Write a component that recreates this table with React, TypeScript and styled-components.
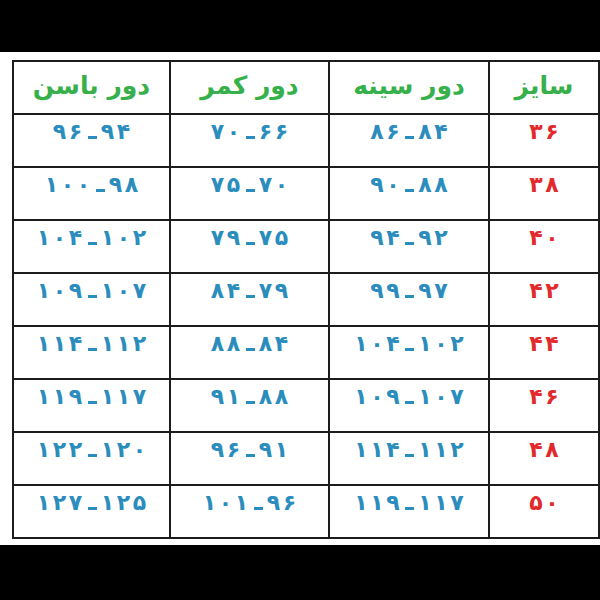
import React from 'react'
import styled, { createGlobalStyle } from 'styled-components'

const GlobalStyle = createGlobalStyle`
  html, body {
    margin: 0;
    padding: 0;
    background: #000;
  }
  body {
    font-family: "DejaVu Sans", sans-serif;
  }
`

const Screen = styled.div`
  width: 600px;
  height: 600px;
  background: #000;
  padding-top: 52px;
  box-sizing: border-box;
`

const Sheet = styled.div`
  width: 600px;
  height: 493px;
  background: #fff;
  padding: 8px 6px 8px 12px;
  box-sizing: border-box;
`

const Table = styled.table`
  width: 100%;
  direction: rtl;
  border-collapse: collapse;
  table-layout: fixed;
  border: 2px solid #1c1c1c;
`

const HeadCell = styled.th<{ $w: number }>`
  width: ${p => p.$w}px;
  height: 47px;
  border: 2px solid #1c1c1c;
  padding: 0 0 4px 0;
  font-size: 25px;
  font-weight: bold;
  color: #36b04a;
  text-align: center;
  vertical-align: middle;
`

const Cell = styled.td<{ $tone: 'size' | 'range' }>`
  height: 45px;
  border: 2px solid #1c1c1c;
  padding: 6px 0 0 0;
  font-size: 22px;
  font-weight: bold;
  line-height: 22px;
  color: ${p => (p.$tone === 'size' ? '#e2292c' : '#2a8dbd')};
  text-align: center;
  vertical-align: top;
`

const Digits = styled.span`
  display: inline-flex;
  direction: ltr;
  align-items: baseline;
`

const Glyph = styled.span`
  display: inline-block;
  width: 16px;
  text-align: center;
`

const Dash = styled.span`
  display: inline-block;
  width: 9px;
  height: 3px;
  margin: 0 3px 0 4px;
  background: currentColor;
`

const fa = (n: number) => String(n).replace(/\d/g, d => '۰۱۲۳۴۵۶۷۸۹'[Number(d)])

const Num: React.FC<{ n: number }> = ({ n }) => (
  <>
    {fa(n).split('').map((c, i) => (
      <Glyph key={i}>{c}</Glyph>
    ))}
  </>
)

type Row = { size: number; chest: [number, number]; waist: [number, number]; hip: [number, number] }

const rows: Row[] = [
  { size: 36, chest: [84, 86], waist: [66, 70], hip: [94, 96] },
  { size: 38, chest: [88, 90], waist: [70, 75], hip: [98, 100] },
  { size: 40, chest: [92, 94], waist: [75, 79], hip: [102, 104] },
  { size: 42, chest: [97, 99], waist: [79, 84], hip: [107, 109] },
  { size: 44, chest: [102, 104], waist: [84, 88], hip: [112, 114] },
  { size: 46, chest: [107, 109], waist: [88, 91], hip: [117, 119] },
  { size: 48, chest: [112, 114], waist: [91, 96], hip: [120, 122] },
  { size: 50, chest: [117, 119], waist: [96, 101], hip: [125, 127] },
]

const RangeText: React.FC<{ value: [number, number] }> = ({ value }) => (
  <Digits>
    <Num n={value[1]} />
    <Dash />
    <Num n={value[0]} />
  </Digits>
)

const App: React.FC = () => {
  return (
    <Screen>
      <GlobalStyle />
      <Sheet>
        <Table>
          <thead>
            <tr>
              <HeadCell $w={108}>سایز</HeadCell>
              <HeadCell $w={158}>دور سینه</HeadCell>
              <HeadCell $w={157}>دور کمر</HeadCell>
              <HeadCell $w={155}>دور باسن</HeadCell>
            </tr>
          </thead>
          <tbody>
            {rows.map(r => (
              <tr key={r.size}>
                <Cell $tone="size"><Digits><Num n={r.size} /></Digits></Cell>
                <Cell $tone="range"><RangeText value={r.chest} /></Cell>
                <Cell $tone="range"><RangeText value={r.waist} /></Cell>
                <Cell $tone="range"><RangeText value={r.hip} /></Cell>
              </tr>
            ))}
          </tbody>
        </Table>
      </Sheet>
    </Screen>
  )
}

export default App
